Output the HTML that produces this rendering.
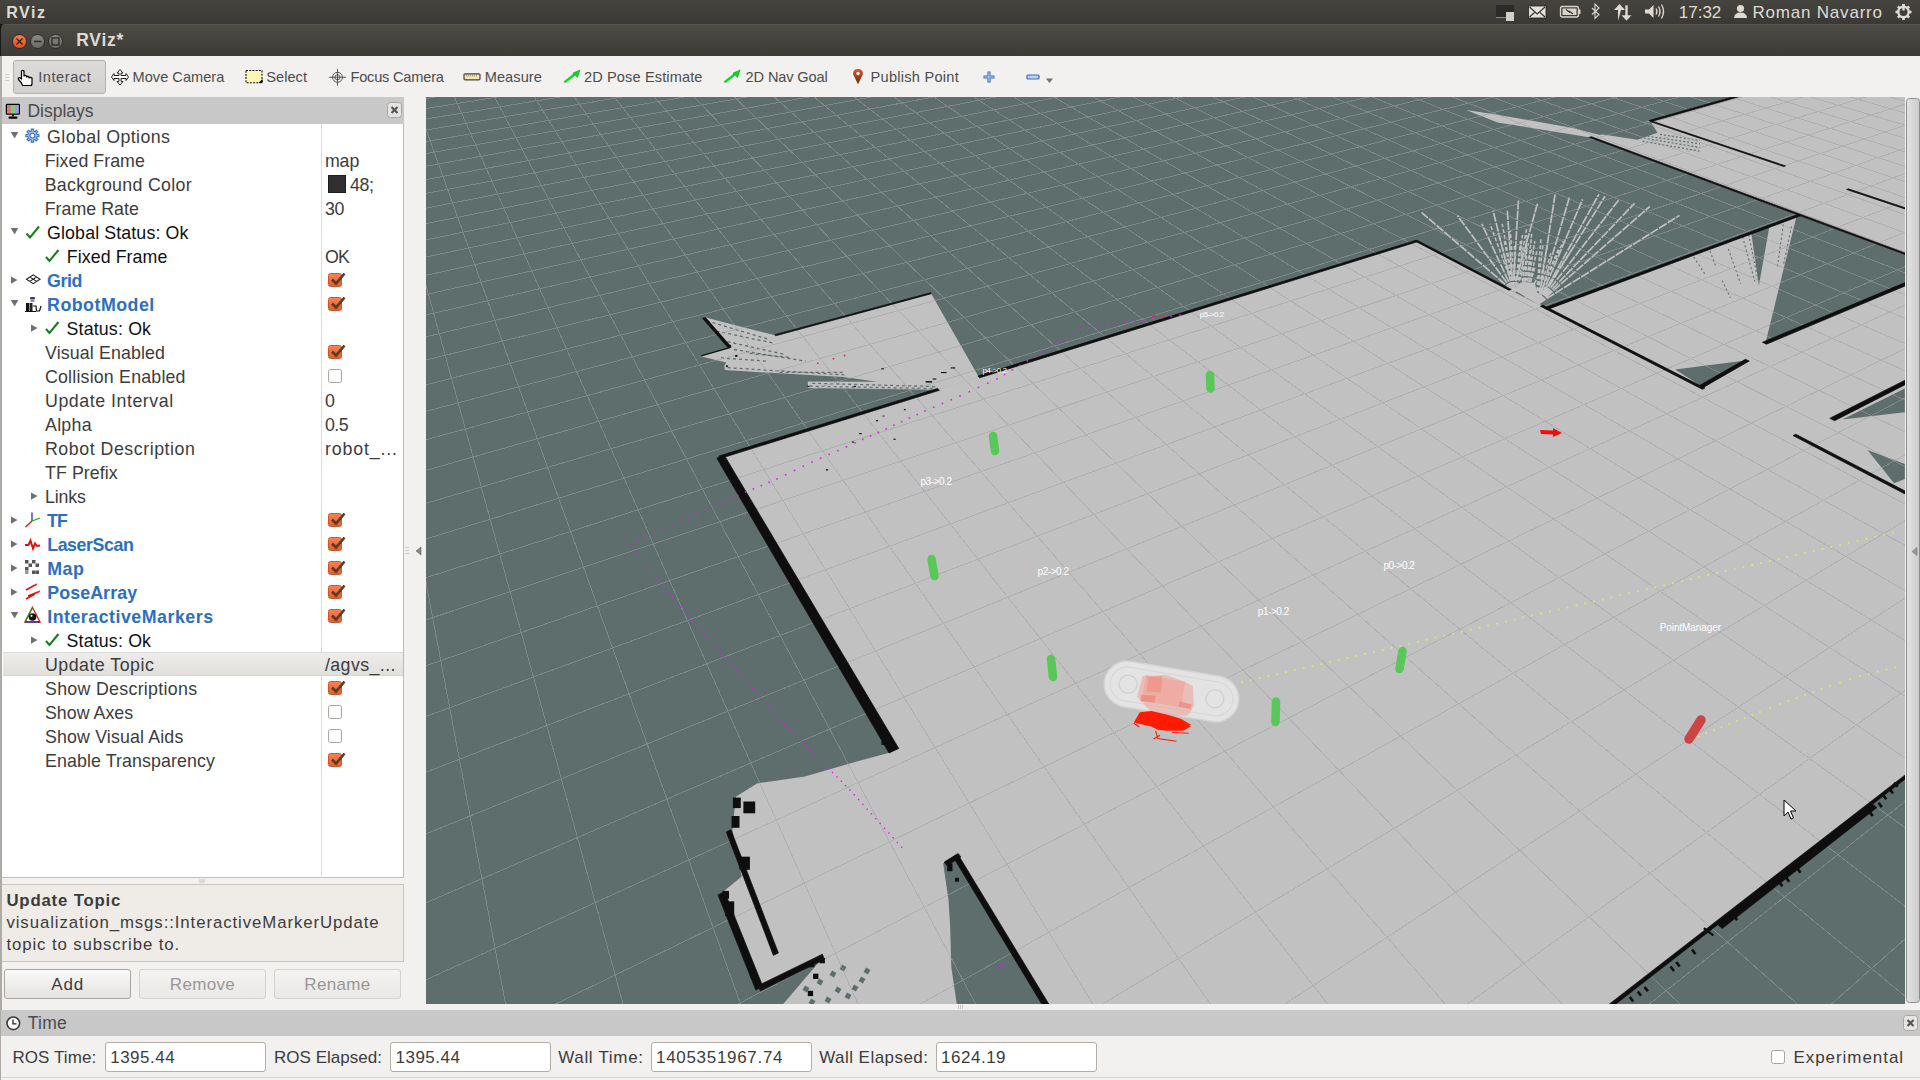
<!DOCTYPE html><html><head><meta charset="utf-8"><style>
*{margin:0;padding:0;box-sizing:border-box}
html,body{width:1920px;height:1080px;overflow:hidden;background:#f2f1f0;font-family:"Liberation Sans",sans-serif}
.t{position:absolute;line-height:1;white-space:pre}
.a{position:absolute}
.cb{position:absolute;width:14px;height:14px;border-radius:2.5px;background:linear-gradient(#f58352,#e0602c);border:1px solid #c9562a}
.cbu{position:absolute;width:14px;height:14px;border-radius:2.5px;background:#fff;border:1px solid #aaa49e}
.btn{position:absolute;border:1px solid #a9a49f;border-radius:3px;background:linear-gradient(#fafafa,#e4e2e0)}
.btnd{position:absolute;border:1px solid #d5d2ce;border-radius:3px;background:linear-gradient(#f4f3f2,#e9e8e6)}
.fld{position:absolute;background:#fff;border:1px solid #b3ada8;border-radius:3px}
</style></head><body>
<div class="a" style="left:0;top:0;width:1920px;height:24px;background:linear-gradient(#45443f,#3a3935)"></div>
<div class="t" style="left:6.25px;top:5.15px;font-size:16px;color:#dfdbd2;font-weight:bold;letter-spacing:1.550px;">RViz</div>
<div class="t" style="left:1678.75px;top:4.30px;font-size:17px;color:#dfdbd2;font-weight:normal;letter-spacing:0.000px;">17:32</div>
<div class="t" style="left:1752.50px;top:4.30px;font-size:17px;color:#dfdbd2;font-weight:normal;letter-spacing:0.792px;">Roman Navarro</div>
<div class="a" style="left:0;top:24px;width:8px;height:8px;background:#161614"></div>
<div class="a" style="left:0;top:24px;width:1920px;height:32px;background:linear-gradient(#4c4b46,#3c3b37);border-top-left-radius:5px;border-left:1px solid #1a1a1a;border-top:1px solid #56554f"></div>
<div class="t" style="left:76.25px;top:32.12px;font-size:17.5px;color:#dfdbd2;font-weight:bold;letter-spacing:0.725px;">RViz*</div>
<div class="a" style="left:12px;top:34px;width:15px;height:15px;border-radius:50%;background:linear-gradient(#f47b54,#e4521c);border:1px solid #2e2d2a"></div>
<div class="a" style="left:30px;top:34px;width:15px;height:15px;border-radius:50%;background:linear-gradient(#8a8984,#6a6964);border:1px solid #2e2d2a"></div>
<div class="a" style="left:48px;top:34px;width:15px;height:15px;border-radius:50%;background:linear-gradient(#8a8984,#6a6964);border:1px solid #2e2d2a"></div>
<div class="a" style="left:0;top:56px;width:2px;height:1024px;background:#aeaba6"></div>
<div class="a" style="left:13px;top:60px;width:93px;height:34px;border:1px solid #b5b0ab;border-radius:3px;background:linear-gradient(#dedcda,#d2d0ce)"></div>
<div class="t" style="left:38.25px;top:69.79px;font-size:14.6px;color:#4c4c4c;font-weight:normal;letter-spacing:0.543px;">Interact</div>
<div class="t" style="left:132.50px;top:69.79px;font-size:14.6px;color:#4c4c4c;font-weight:normal;letter-spacing:0.020px;">Move Camera</div>
<div class="t" style="left:266.25px;top:69.79px;font-size:14.6px;color:#4c4c4c;font-weight:normal;letter-spacing:0.030px;">Select</div>
<div class="t" style="left:350.50px;top:69.79px;font-size:14.6px;color:#4c4c4c;font-weight:normal;letter-spacing:-0.209px;">Focus Camera</div>
<div class="t" style="left:484.70px;top:69.79px;font-size:14.6px;color:#4c4c4c;font-weight:normal;letter-spacing:0.067px;">Measure</div>
<div class="t" style="left:584.00px;top:69.79px;font-size:14.6px;color:#4c4c4c;font-weight:normal;letter-spacing:0.107px;">2D Pose Estimate</div>
<div class="t" style="left:745.60px;top:69.79px;font-size:14.6px;color:#4c4c4c;font-weight:normal;letter-spacing:-0.140px;">2D Nav Goal</div>
<div class="t" style="left:870.60px;top:69.79px;font-size:14.6px;color:#4c4c4c;font-weight:normal;letter-spacing:0.242px;">Publish Point</div>
<div class="a" style="left:2px;top:97px;width:402px;height:27px;background:#c8c8c8"></div>
<div class="t" style="left:27.50px;top:102.62px;font-size:17.5px;color:#4c4c4c;font-weight:normal;letter-spacing:-0.014px;">Displays</div>
<div class="a" style="left:2px;top:124px;width:402px;height:754px;background:#fff;border-right:1px solid #bdb8b3;border-bottom:1px solid #c0bdb8"></div>
<div class="a" style="left:321px;top:124px;width:1px;height:754px;background:#dcdcdc"></div>
<div class="a" style="left:3px;top:652px;width:400px;height:24px;background:linear-gradient(#eeedeb,#e0dfdc);border-top:1px solid #dcdad7;border-bottom:1px solid #d6d4d1"></div>
<div class="t" style="left:47.10px;top:128.77px;font-size:17.8px;color:#3c3c3c;font-weight:normal;letter-spacing:0.400px;">Global Options</div>
<div class="t" style="left:44.70px;top:152.77px;font-size:17.8px;color:#3c3c3c;font-weight:normal;letter-spacing:0.030px;">Fixed Frame</div>
<div class="t" style="left:324.90px;top:152.77px;font-size:17.8px;color:#3c3c3c;font-weight:normal;letter-spacing:-0.100px;">map</div>
<div class="t" style="left:44.70px;top:176.77px;font-size:17.8px;color:#3c3c3c;font-weight:normal;letter-spacing:0.313px;">Background Color</div>
<div class="t" style="left:350.10px;top:176.77px;font-size:17.8px;color:#3c3c3c;font-weight:normal;letter-spacing:-0.450px;">48;</div>
<div class="t" style="left:44.70px;top:200.77px;font-size:17.8px;color:#3c3c3c;font-weight:normal;letter-spacing:0.033px;">Frame Rate</div>
<div class="t" style="left:324.90px;top:200.77px;font-size:17.8px;color:#3c3c3c;font-weight:normal;letter-spacing:-0.300px;">30</div>
<div class="t" style="left:47.10px;top:224.77px;font-size:17.8px;color:#101010;font-weight:normal;letter-spacing:0.119px;">Global Status: Ok</div>
<div class="t" style="left:66.80px;top:248.77px;font-size:17.8px;color:#101010;font-weight:normal;letter-spacing:0.070px;">Fixed Frame</div>
<div class="t" style="left:324.90px;top:248.77px;font-size:17.8px;color:#3c3c3c;font-weight:normal;letter-spacing:-0.700px;">OK</div>
<div class="t" style="left:47.10px;top:272.77px;font-size:17.8px;color:#2b70c0;font-weight:bold;letter-spacing:-0.400px;">Grid</div>
<div class="cb" style="left:328px;top:273px"></div>
<svg class="a" style="left:329px;top:271px" width="18" height="16"><path d="M3 8.5 L7 12.5 L15.5 2.5" stroke="#5b3a2c" stroke-width="2.6" fill="none" stroke-linejoin="miter"/></svg>
<div class="t" style="left:47.10px;top:296.77px;font-size:17.8px;color:#2b70c0;font-weight:bold;letter-spacing:0.489px;">RobotModel</div>
<div class="cb" style="left:328px;top:297px"></div>
<svg class="a" style="left:329px;top:295px" width="18" height="16"><path d="M3 8.5 L7 12.5 L15.5 2.5" stroke="#5b3a2c" stroke-width="2.6" fill="none" stroke-linejoin="miter"/></svg>
<div class="t" style="left:66.50px;top:320.77px;font-size:17.8px;color:#101010;font-weight:normal;letter-spacing:0.167px;">Status: Ok</div>
<div class="t" style="left:45.00px;top:344.77px;font-size:17.8px;color:#3c3c3c;font-weight:normal;letter-spacing:0.123px;">Visual Enabled</div>
<div class="cb" style="left:328px;top:345px"></div>
<svg class="a" style="left:329px;top:343px" width="18" height="16"><path d="M3 8.5 L7 12.5 L15.5 2.5" stroke="#5b3a2c" stroke-width="2.6" fill="none" stroke-linejoin="miter"/></svg>
<div class="t" style="left:45.00px;top:368.77px;font-size:17.8px;color:#3c3c3c;font-weight:normal;letter-spacing:0.194px;">Collision Enabled</div>
<div class="cbu" style="left:328px;top:369px"></div>
<div class="t" style="left:45.00px;top:392.77px;font-size:17.8px;color:#3c3c3c;font-weight:normal;letter-spacing:0.536px;">Update Interval</div>
<div class="t" style="left:324.90px;top:392.77px;font-size:17.8px;color:#3c3c3c;font-weight:normal;letter-spacing:0.000px;">0</div>
<div class="t" style="left:45.00px;top:416.77px;font-size:17.8px;color:#3c3c3c;font-weight:normal;letter-spacing:0.275px;">Alpha</div>
<div class="t" style="left:324.90px;top:416.77px;font-size:17.8px;color:#3c3c3c;font-weight:normal;letter-spacing:-0.500px;">0.5</div>
<div class="t" style="left:45.00px;top:440.77px;font-size:17.8px;color:#3c3c3c;font-weight:normal;letter-spacing:0.531px;">Robot Description</div>
<div class="t" style="left:324.90px;top:440.77px;font-size:17.8px;color:#3c3c3c;font-weight:normal;letter-spacing:0.863px;">robot_...</div>
<div class="t" style="left:45.00px;top:464.77px;font-size:17.8px;color:#3c3c3c;font-weight:normal;letter-spacing:0.075px;">TF Prefix</div>
<div class="t" style="left:45.00px;top:488.77px;font-size:17.8px;color:#3c3c3c;font-weight:normal;letter-spacing:-0.125px;">Links</div>
<div class="t" style="left:46.90px;top:512.77px;font-size:17.8px;color:#2b70c0;font-weight:bold;letter-spacing:-0.700px;">TF</div>
<div class="cb" style="left:328px;top:513px"></div>
<svg class="a" style="left:329px;top:511px" width="18" height="16"><path d="M3 8.5 L7 12.5 L15.5 2.5" stroke="#5b3a2c" stroke-width="2.6" fill="none" stroke-linejoin="miter"/></svg>
<div class="t" style="left:47.20px;top:536.77px;font-size:17.8px;color:#2b70c0;font-weight:bold;letter-spacing:-0.412px;">LaserScan</div>
<div class="cb" style="left:328px;top:537px"></div>
<svg class="a" style="left:329px;top:535px" width="18" height="16"><path d="M3 8.5 L7 12.5 L15.5 2.5" stroke="#5b3a2c" stroke-width="2.6" fill="none" stroke-linejoin="miter"/></svg>
<div class="t" style="left:47.20px;top:560.77px;font-size:17.8px;color:#2b70c0;font-weight:bold;letter-spacing:0.550px;">Map</div>
<div class="cb" style="left:328px;top:561px"></div>
<svg class="a" style="left:329px;top:559px" width="18" height="16"><path d="M3 8.5 L7 12.5 L15.5 2.5" stroke="#5b3a2c" stroke-width="2.6" fill="none" stroke-linejoin="miter"/></svg>
<div class="t" style="left:47.20px;top:584.77px;font-size:17.8px;color:#2b70c0;font-weight:bold;letter-spacing:0.113px;">PoseArray</div>
<div class="cb" style="left:328px;top:585px"></div>
<svg class="a" style="left:329px;top:583px" width="18" height="16"><path d="M3 8.5 L7 12.5 L15.5 2.5" stroke="#5b3a2c" stroke-width="2.6" fill="none" stroke-linejoin="miter"/></svg>
<div class="t" style="left:47.20px;top:608.77px;font-size:17.8px;color:#2b70c0;font-weight:bold;letter-spacing:0.512px;">InteractiveMarkers</div>
<div class="cb" style="left:328px;top:609px"></div>
<svg class="a" style="left:329px;top:607px" width="18" height="16"><path d="M3 8.5 L7 12.5 L15.5 2.5" stroke="#5b3a2c" stroke-width="2.6" fill="none" stroke-linejoin="miter"/></svg>
<div class="t" style="left:66.50px;top:632.77px;font-size:17.8px;color:#101010;font-weight:normal;letter-spacing:0.167px;">Status: Ok</div>
<div class="t" style="left:45.00px;top:656.77px;font-size:17.8px;color:#3c3c3c;font-weight:normal;letter-spacing:0.482px;">Update Topic</div>
<div class="t" style="left:324.90px;top:656.77px;font-size:17.8px;color:#3c3c3c;font-weight:normal;letter-spacing:0.425px;">/agvs_...</div>
<div class="t" style="left:45.00px;top:680.77px;font-size:17.8px;color:#3c3c3c;font-weight:normal;letter-spacing:0.300px;">Show Descriptions</div>
<div class="cb" style="left:328px;top:681px"></div>
<svg class="a" style="left:329px;top:679px" width="18" height="16"><path d="M3 8.5 L7 12.5 L15.5 2.5" stroke="#5b3a2c" stroke-width="2.6" fill="none" stroke-linejoin="miter"/></svg>
<div class="t" style="left:45.00px;top:704.77px;font-size:17.8px;color:#3c3c3c;font-weight:normal;letter-spacing:0.013px;">Show Axes</div>
<div class="cbu" style="left:328px;top:705px"></div>
<div class="t" style="left:45.00px;top:728.77px;font-size:17.8px;color:#3c3c3c;font-weight:normal;letter-spacing:0.147px;">Show Visual Aids</div>
<div class="cbu" style="left:328px;top:729px"></div>
<div class="t" style="left:45.00px;top:752.77px;font-size:17.8px;color:#3c3c3c;font-weight:normal;letter-spacing:0.100px;">Enable Transparency</div>
<div class="cb" style="left:328px;top:753px"></div>
<svg class="a" style="left:329px;top:751px" width="18" height="16"><path d="M3 8.5 L7 12.5 L15.5 2.5" stroke="#5b3a2c" stroke-width="2.6" fill="none" stroke-linejoin="miter"/></svg>
<div class="a" style="left:328px;top:175px;width:18px;height:18px;background:#303030;border:1px solid #1e1e1e"></div>
<div class="a" style="left:404px;top:97px;width:22px;height:907px;background:#f2f1f0"></div>
<div class="a" style="left:2px;top:884px;width:402px;height:78px;background:#efebe7;border:1px solid #c9c5c1;border-left:none"></div>
<div class="t" style="left:6.40px;top:893.22px;font-size:16.8px;color:#3c3c3c;font-weight:bold;letter-spacing:0.818px;">Update Topic</div>
<div class="t" style="left:6.40px;top:915.22px;font-size:16.8px;color:#3c3c3c;font-weight:normal;letter-spacing:0.912px;">visualization_msgs::InteractiveMarkerUpdate</div>
<div class="t" style="left:6.40px;top:937.02px;font-size:16.8px;color:#3c3c3c;font-weight:normal;letter-spacing:0.900px;">topic to subscribe to.</div>
<div class="btn" style="left:4px;top:969px;width:127px;height:30px"></div>
<div class="btnd" style="left:139px;top:969px;width:127px;height:30px"></div>
<div class="btnd" style="left:274px;top:969px;width:127px;height:30px"></div>
<div class="t" style="left:51.20px;top:976.15px;font-size:17px;color:#3c3c3c;font-weight:normal;letter-spacing:0.900px;">Add</div>
<div class="t" style="left:169.80px;top:976.15px;font-size:17px;color:#9a9794;font-weight:normal;letter-spacing:0.340px;">Remove</div>
<div class="t" style="left:304.30px;top:976.15px;font-size:17px;color:#9a9794;font-weight:normal;letter-spacing:0.340px;">Rename</div>
<div class="a" style="left:426px;top:97px;width:1479px;height:907px;overflow:hidden"><svg width="1479" height="907" viewBox="0 0 1479 907" style="position:absolute;left:0;top:0">
<rect width="1479" height="907" fill="#5d6e6c"/>
<polygon points="294.7,359.9 990.8,144.0 1120.0,211.6 1373.2,118.2 1166.2,40.0 1492.7,-52.2 2196.0,122.8 541.7,1405.0 357.0,907.3 397.5,859.8 333.3,891.2 295.3,796.3 315.7,779.6 306.4,732.9 309.9,699.7 330.9,686.4 378.8,679.4 429.0,665.1 464.1,655.4" fill="#c1c1c1"/>
<polygon points="278.1,219.9 312.0,229.0 349.1,238.2 505.1,196.4 552.9,280.2 512.5,292.8 382.3,290.9 381.6,284.4 451.3,284.8 417.4,280.1 298.9,273.1 298.3,268.8 300.2,265.5 274.2,259.2 304.2,250.5 278.1,219.9" fill="#c1c1c1"/>
<line x1="280.7" y1="223.8" x2="341.9" y2="242.1" stroke="#5d6e6c" stroke-width="1.3" stroke-dasharray="3 3"/>
<line x1="284.6" y1="232.9" x2="347.1" y2="246.0" stroke="#5d6e6c" stroke-width="1.3" stroke-dasharray="3 3"/>
<line x1="289.8" y1="242.1" x2="360.1" y2="257.7" stroke="#5d6e6c" stroke-width="1.3" stroke-dasharray="3 3"/>
<line x1="308.1" y1="252.5" x2="379.7" y2="264.2" stroke="#5d6e6c" stroke-width="1.3" stroke-dasharray="3 3"/>
<line x1="301.6" y1="270.7" x2="418.7" y2="277.9" stroke="#5d6e6c" stroke-width="1.3" stroke-dasharray="3 3"/>
<line x1="353.6" y1="275.3" x2="417.4" y2="275.3" stroke="#5d6e6c" stroke-width="1.3" stroke-dasharray="3 3"/>
<line x1="386.2" y1="286.3" x2="509.9" y2="289.6" stroke="#5d6e6c" stroke-width="1.3" stroke-dasharray="3 3"/>
<line x1="383.6" y1="289.2" x2="509.9" y2="291.5" stroke="#5d6e6c" stroke-width="1.3" stroke-dasharray="3 3"/>
<line x1="323.7" y1="256.4" x2="362.8" y2="260.3" stroke="#5d6e6c" stroke-width="1.3" stroke-dasharray="3 3"/>
<line x1="295.0" y1="260.9" x2="341.9" y2="264.2" stroke="#5d6e6c" stroke-width="1.3" stroke-dasharray="3 3"/>
<polygon points="517.2,766.4 529.5,758.6 662.2,973.2 555.7,1040.1 530.8,907.0 525.3,869.9 524.2,829.9 522.5,802.9" fill="#5d6e6c"/>
<polygon points="1373.2,118.2 1370.6,119.1 1339.3,246.7 1514.7,171.6" fill="#5d6e6c"/>
<polygon points="1249.2,272.6 1321.4,263.2 1277.7,290.7" fill="#5d6e6c"/>
<polygon points="1325.2,135.6 1344.1,125.4 1332.9,188.6" fill="#5d6e6c"/>
<polygon points="1416.3,322.6 1478.8,291.5 1478.8,315.2" fill="#5d6e6c"/>
<polygon points="1441.5,353.0 1478.8,367.1 1478.8,381.9 1468.1,386.3" fill="#5d6e6c"/>
<polygon points="1165.2,35.8 1211.5,42.8 1231.5,35.8 1224.6,24.5 1196.5,29.2" fill="#5d6e6c"/>
<line x1="1267.7" y1="160.0" x2="1279.9" y2="178.4" stroke="#5d6e6c" stroke-width="1.1" stroke-dasharray="2 2.5"/>
<line x1="1284.0" y1="153.9" x2="1290.1" y2="170.2" stroke="#5d6e6c" stroke-width="1.1" stroke-dasharray="2 2.5"/>
<line x1="1296.2" y1="183.5" x2="1304.4" y2="200.8" stroke="#5d6e6c" stroke-width="1.1" stroke-dasharray="2 2.5"/>
<line x1="1302.4" y1="151.9" x2="1314.6" y2="186.5" stroke="#5d6e6c" stroke-width="1.1" stroke-dasharray="2 2.5"/>
<line x1="1316.6" y1="139.7" x2="1328.8" y2="184.5" stroke="#5d6e6c" stroke-width="1.1" stroke-dasharray="2 2.5"/>
<line x1="1322.7" y1="137.6" x2="1331.9" y2="182.5" stroke="#5d6e6c" stroke-width="1.1" stroke-dasharray="2 2.5"/>
<line x1="1357.4" y1="127.4" x2="1351.3" y2="170.2" stroke="#5d6e6c" stroke-width="1.1" stroke-dasharray="2 2.5"/>
<line x1="1365.5" y1="129.5" x2="1357.4" y2="168.2" stroke="#5d6e6c" stroke-width="1.1" stroke-dasharray="2 2.5"/>
<polygon points="1040.2,13.0 1071.5,17.8 1109.0,24.2 1146.5,31.1 1165.2,35.8 1184.0,40.5 1161.5,39.9 1109.0,31.5 1071.5,25.5" fill="#c1c1c1"/>
<line x1="1214.0" y1="40.5" x2="1274.0" y2="50.5" stroke="#5d6e6c" stroke-width="1.2" stroke-dasharray="2 2"/>
<line x1="1221.5" y1="39.2" x2="1274.0" y2="46.8" stroke="#5d6e6c" stroke-width="1.2" stroke-dasharray="2 2"/>
<line x1="1216.5" y1="44.2" x2="1274.0" y2="54.2" stroke="#5d6e6c" stroke-width="1.2" stroke-dasharray="2 2"/>
<line x1="1234.0" y1="37.4" x2="1274.0" y2="43.6" stroke="#5d6e6c" stroke-width="1.2" stroke-dasharray="2 2"/>
<rect x="377.5" y="889.5" width="5" height="5" fill="#5d6e6c" transform="rotate(30 380 892)"/>
<rect x="391.5" y="882.5" width="5" height="5" fill="#5d6e6c" transform="rotate(30 394 885)"/>
<rect x="404.5" y="874.5" width="5" height="5" fill="#5d6e6c" transform="rotate(30 407 877)"/>
<rect x="414.5" y="868.5" width="5" height="5" fill="#5d6e6c" transform="rotate(30 417 871)"/>
<rect x="419.5" y="896.5" width="5" height="5" fill="#5d6e6c" transform="rotate(30 422 899)"/>
<rect x="409.5" y="890.5" width="5" height="5" fill="#5d6e6c" transform="rotate(30 412 893)"/>
<rect x="399.5" y="900.5" width="5" height="5" fill="#5d6e6c" transform="rotate(30 402 903)"/>
<rect x="383.5" y="902.5" width="5" height="5" fill="#5d6e6c" transform="rotate(30 386 905)"/>
<rect x="426.5" y="888.5" width="5" height="5" fill="#5d6e6c" transform="rotate(30 429 891)"/>
<rect x="433.5" y="880.5" width="5" height="5" fill="#5d6e6c" transform="rotate(30 436 883)"/>
<rect x="438.5" y="871.5" width="5" height="5" fill="#5d6e6c" transform="rotate(30 441 874)"/>
<path d="M1087.0 194.0L995.7 115.6M1087.0 194.0L1031.4 118.6M1087.0 194.0L1055.8 126.8M1087.0 194.0L1067.0 113.5M1087.0 194.0L1081.3 113.5M1087.0 194.0L1092.5 102.3M1087.0 194.0L1111.8 105.4M1112.0 207.0L1129.1 97.3M1112.0 207.0L1143.4 100.3M1112.0 207.0L1156.6 102.3M1112.0 207.0L1172.9 97.3M1112.0 207.0L1179.0 99.3M1112.0 207.0L1193.3 102.3M1112.0 207.0L1208.5 106.4M1112.0 207.0L1223.8 109.5M1112.0 207.0L1253.5 118.4" stroke="#c1c1c1" stroke-width="1.7" fill="none" stroke-dasharray="9 1.2"/>
<path d="M1089.0 195.0L1064.0 126.8M1089.0 195.0L1076.2 126.8M1089.0 195.0L1084.3 133.9M1089.0 195.0L1096.5 138.0M1089.0 195.0L1102.6 146.1M1110.0 206.0L1116.9 148.2M1110.0 206.0L1125.0 155.3M1110.0 206.0L1131.2 156.3M1110.0 206.0L1141.3 159.4M1089.0 195.0L1106.7 150.2M1089.0 195.0L1094.5 144.1M1089.0 195.0L1088.4 148.2M1110.0 206.0L1114.9 142.1M1110.0 206.0L1121.0 150.2M1089.0 195.0L1072.1 135.9M1089.0 195.0L1078.2 144.1M1110.0 206.0L1133.2 150.2M1110.0 206.0L1137.3 144.1M1110.0 206.0L1147.4 150.2M1089.0 195.0L1100.6 131.9" stroke="#c1c1c1" stroke-width="1.5" fill="none" stroke-dasharray="4 2"/>
<path d="M1100.0 201.0L1094.5 144.1M1100.0 201.0L1099.6 150.2M1100.0 201.0L1104.7 160.4M1100.0 201.0L1108.8 144.1M1100.0 201.0L1096.5 160.4M1100.0 201.0L1102.6 168.5M1100.0 201.0L1110.8 154.3M1100.0 201.0L1108.8 170.6M1100.0 201.0L1105.7 135.9M1100.0 201.0L1100.6 138.0M1100.0 201.0L1094.5 172.6M1100.0 201.0L1112.8 178.7M1100.0 201.0L1097.6 180.7" stroke="#c1c1c1" stroke-width="1.6" fill="none" stroke-dasharray="4 1.5"/>
<polygon points="1086.4,191.9 1096.5,184.8 1108.8,185.8 1114.9,209.2" fill="#c1c1c1"/>
<path d="M-383.5 -163.0L30417.4 -46370.5M-355.9 -165.5L-105701.4 181158.0M-328.8 -168.0L-15287.1 30026.5M-302.1 -170.4L-7002.0 16177.7M-275.9 -172.8L-3892.3 10979.6M-250.0 -175.1L-2262.7 8255.8M-224.6 -177.4L-1259.7 6579.3M-199.6 -179.7L-580.2 5443.4M-174.9 -181.9L-89.4 4622.9M-150.7 -184.1L281.8 4002.6M-126.8 -186.3L572.2 3517.0M-103.3 -188.4L805.8 3126.7M-80.1 -190.5L997.6 2806.0M-57.3 -192.5L1158.0 2537.9M-34.8 -194.6L1294.1 2310.5M-12.7 -196.6L1411.0 2115.0M9.1 -198.6L1512.5 1945.3M30.6 -200.5L1601.5 1796.5M51.8 -202.4L1680.2 1665.0M72.7 -204.3L1750.2 1548.0M93.3 -206.2L1812.9 1443.1M113.6 -208.0L1869.5 1348.7M133.6 -209.8L1920.6 1263.1M153.3 -211.6L1967.2 1185.3M172.7 -213.4L2009.8 1114.1M191.9 -215.1L2048.8 1048.9M210.8 -216.8L2084.7 988.8M229.5 -218.5L2117.9 933.3M247.9 -220.2L2148.7 881.9M266.1 -221.8L2177.3 834.1M284.0 -223.4L2203.9 789.6M301.7 -225.0L2228.8 748.1M319.1 -226.6L2252.0 709.2M336.3 -228.2L2273.8 672.7M353.3 -229.7L2294.3 638.5M370.1 -231.2L2313.6 606.2M386.7 -232.7L2331.9 575.8M403.0 -234.2L2349.1 547.0M419.2 -235.7L2365.3 519.8M435.1 -237.1L2380.8 494.0M450.9 -238.6L2395.4 469.5M466.4 -240.0L2409.3 446.3M481.8 -241.4L2422.5 424.2M496.9 -242.7L2435.1 403.1M511.9 -244.1L2447.2 383.0M526.7 -245.4L2458.7 363.8M541.4 -246.7L2469.6 345.5M555.8 -248.1L2480.1 327.9M570.1 -249.3L2490.2 311.1M584.2 -250.6L2499.8 295.0M598.1 -251.9L2509.1 279.6M611.9 -253.1L2517.9 264.7M625.5 -254.4L2526.5 250.5M639.0 -255.6L2534.7 236.8M652.3 -256.8L2542.6 223.6M665.4 -258.0L2550.2 210.9M678.5 -259.2L2557.5 198.6M691.3 -260.3L2564.5 186.8M704.0 -261.5L2571.4 175.4M716.6 -262.6L2578.0 164.4M729.0 -263.7L2584.3 153.8M741.3 -264.8L2590.5 143.5M753.5 -265.9L2596.4 133.5M765.5 -267.0L2602.2 123.9M777.4 -268.1L2607.7 114.6M789.2 -269.2L2613.2 105.6M800.8 -270.2L2618.4 96.8M812.3 -271.3L2623.5 88.3M823.7 -272.3L2628.4 80.1M835.0 -273.3L2633.2 72.1M-383.5 -163.0L846.1 -274.3M-386.2 -159.0L854.6 -272.7M-388.9 -154.9L863.2 -271.1M-391.7 -150.7L871.9 -269.5M-394.6 -146.4L880.7 -267.8M-397.6 -142.0L889.7 -266.1M-400.6 -137.4L898.9 -264.4M-403.7 -132.7L908.2 -262.6M-407.0 -127.9L917.7 -260.8M-410.3 -122.9L927.4 -259.0M-413.7 -117.8L937.2 -257.1M-417.2 -112.5L947.2 -255.2M-420.8 -107.1L957.4 -253.3M-424.6 -101.5L967.8 -251.3M-428.4 -95.7L978.3 -249.3M-432.4 -89.7L989.1 -247.3M-436.5 -83.6L1000.1 -245.2M-440.7 -77.2L1011.2 -243.1M-445.1 -70.6L1022.6 -241.0M-449.6 -63.8L1034.2 -238.8M-454.3 -56.8L1046.0 -236.6M-459.2 -49.5L1058.1 -234.3M-464.2 -42.0L1070.4 -231.9M-469.4 -34.1L1082.9 -229.6M-474.8 -26.0L1095.7 -227.2M-480.5 -17.6L1108.8 -224.7M-486.3 -8.9L1122.1 -222.2M-492.4 0.3L1135.7 -219.6M-498.7 9.7L1149.6 -217.0M-505.2 19.6L1163.8 -214.3M-512.1 29.9L1178.3 -211.5M-519.2 40.6L1193.2 -208.7M-526.7 51.8L1208.3 -205.9M-534.5 63.4L1223.8 -203.0M-542.6 75.7L1239.6 -200.0M-551.2 88.5L1255.8 -196.9M-560.1 101.9L1272.4 -193.8M-569.5 116.0L1289.3 -190.6M-579.4 130.8L1306.7 -187.3M-589.7 146.3L1324.4 -183.9M-600.7 162.7L1342.6 -180.5M-612.2 180.0L1361.3 -177.0M-624.4 198.3L1380.4 -173.4M-637.3 217.6L1400.0 -169.7M-650.9 238.1L1420.1 -165.9M-665.4 259.9L1440.7 -162.0M-680.8 283.0L1461.8 -158.0M-697.3 307.6L1483.5 -153.9M-714.8 334.0L1505.8 -149.7M-733.6 362.1L1528.6 -145.3M-753.7 392.3L1552.2 -140.9M-775.4 424.8L1576.3 -136.3M-798.7 459.9L1601.2 -131.6M-824.0 497.8L1626.7 -126.8M-851.4 538.9L1653.1 -121.8M-881.3 583.7L1680.1 -116.7M-913.9 632.7L1708.0 -111.4M-949.8 686.4L1736.8 -106.0M-989.3 745.7L1766.4 -100.4M-1033.0 811.4L1797.0 -94.6M-1081.8 884.6L1828.5 -88.6M-1136.5 966.6L1861.1 -82.5M-1198.3 1059.3L1894.7 -76.1M-1268.6 1164.8L1929.5 -69.6M-1349.3 1285.9L1965.5 -62.8M-1443.0 1426.4L2002.7 -55.7M-1553.0 1591.4L2041.2 -48.5M-1683.9 1787.8L2081.1 -40.9M-1842.5 2025.7L2122.4 -33.1M-2038.4 2319.6L2165.3 -25.0M-2286.7 2692.1L2209.9 -16.6M-2611.6 3179.4L2256.1 -7.8M-3054.9 3844.5L2304.2 1.3M-3695.9 4806.2L2354.2 10.7M-4704.9 6319.8L2406.3 20.5M-6526.0 9051.8L2460.5 30.8M-10800.2 15464.1L2517.1 41.5M-32712.2 48336.3L2576.1 52.7M30417.4 -46370.5L2637.8 64.3" stroke="rgba(160,160,164,0.5)" stroke-width="1" fill="none" shape-rendering="crispEdges"/>
<polygon points="294.2,361.5 513.4,293.3 511.6,291.4 292.8,359.1" fill="#0e0e0e" stroke="#0e0e0e" stroke-width="0.7"/>
<polygon points="553.7,280.8 992.0,144.6 989.6,143.4 551.9,278.9" fill="#0e0e0e" stroke="#0e0e0e" stroke-width="0.7"/>
<polygon points="290.8,361.2 463.0,656.0 472.8,651.5 298.6,358.7" fill="#0e0e0e" stroke="#0e0e0e" stroke-width="0.7"/>
<polygon points="988.7,143.9 1082.9,193.2 1085.3,192.4 991.0,143.2" fill="#0e0e0e" stroke="#0e0e0e" stroke-width="0.7"/>
<polygon points="1114.5,209.3 1276.3,292.3 1279.0,291.0 1117.2,208.3" fill="#0e0e0e" stroke="#0e0e0e" stroke-width="0.7"/>
<polygon points="1121.5,212.4 1374.7,118.8 1371.6,117.6 1118.5,210.8" fill="#0e0e0e" stroke="#0e0e0e" stroke-width="0.7"/>
<polygon points="1163.3,40.3 1878.7,306.4 1880.6,305.0 1165.5,39.7" fill="#0e0e0e" stroke="#0e0e0e" stroke-width="0.7"/>
<polygon points="1225.6,24.5 1407.0,-26.9 1404.4,-27.7 1222.9,23.6" fill="#0e0e0e" stroke="#0e0e0e" stroke-width="0.7"/>
<polygon points="1224.2,24.6 1357.7,69.5 1359.5,68.9 1226.0,24.1" fill="#0e0e0e" stroke="#0e0e0e" stroke-width="0.7"/>
<polygon points="1420.6,92.5 1480.8,112.6 1482.5,111.8 1422.3,91.8" fill="#0e0e0e" stroke="#0e0e0e" stroke-width="0.7"/>
<polygon points="1276.7,290.7 1323.3,264.0 1319.4,262.3 1272.7,288.9" fill="#0e0e0e" stroke="#0e0e0e" stroke-width="0.7"/>
<polygon points="1340.5,247.2 1518.9,172.2 1514.9,170.6 1336.4,245.3" fill="#0e0e0e" stroke="#0e0e0e" stroke-width="0.7"/>
<polygon points="1408.6,323.7 1652.7,199.1 1648.1,197.4 1403.8,321.3" fill="#0e0e0e" stroke="#0e0e0e" stroke-width="0.7"/>
<polygon points="1367.0,338.6 1884.8,608.7 1887.3,606.2 1369.8,337.2" fill="#0e0e0e" stroke="#0e0e0e" stroke-width="0.7"/>
<polygon points="527.1,759.8 744.0,1120.2 749.7,1116.0 531.9,757.3" fill="#0e0e0e" stroke="#0e0e0e" stroke-width="0.7"/>
<polygon points="520.9,768.7 534.8,760.0 532.1,756.4 518.2,765.1" fill="#0e0e0e" stroke="#0e0e0e" stroke-width="0.7"/>
<polygon points="300.3,734.9 347.4,858.4 352.4,855.9 304.9,732.8" fill="#0e0e0e" stroke="#0e0e0e" stroke-width="0.7"/>
<polygon points="292.0,797.9 329.8,893.1 336.8,889.3 298.6,794.7" fill="#0e0e0e" stroke="#0e0e0e" stroke-width="0.7"/>
<polygon points="334.2,894.0 398.5,862.5 396.4,857.2 332.4,888.4" fill="#0e0e0e" stroke="#0e0e0e" stroke-width="0.7"/>
<polygon points="349.6,238.8 505.4,196.7 504.4,195.8 348.8,237.7" fill="#0e0e0e" stroke="#0e0e0e" stroke-width="0.7"/>
<polygon points="276.5,221.3 302.3,251.0 305.3,250.1 279.5,220.5" fill="#0e0e0e" stroke="#0e0e0e" stroke-width="0.7"/>
<line x1="275.1" y1="258.9" x2="303.8" y2="250.6" stroke="#0e0e0e" stroke-width="1.3"/>
<rect x="455.3" y="271.3" width="2.6" height="1.1" fill="#0e0e0e"/>
<rect x="449.9" y="323.2" width="2.2" height="1.1" fill="#0e0e0e"/>
<rect x="456.6" y="318.6" width="1.9" height="0.9" fill="#0e0e0e"/>
<rect x="433.1" y="336.1" width="2.6" height="1.1" fill="#0e0e0e"/>
<rect x="425.9" y="344.5" width="2.2" height="1.1" fill="#0e0e0e"/>
<rect x="399.9" y="372.2" width="2.2" height="1.3" fill="#0e0e0e"/>
<rect x="514.9" y="275.0" width="5.6" height="1.1" fill="#0e0e0e"/>
<rect x="524.6" y="270.4" width="4.6" height="1.1" fill="#0e0e0e"/>
<rect x="499.6" y="284.1" width="6.5" height="1.5" fill="#0e0e0e"/>
<rect x="506.6" y="281.5" width="3.7" height="1.1" fill="#0e0e0e"/>
<rect x="299.9" y="268.4" width="2.2" height="1.5" fill="#0e0e0e"/>
<rect x="309.2" y="258.0" width="2.2" height="1.9" fill="#0e0e0e"/>
<rect x="302.7" y="247.8" width="2.2" height="1.9" fill="#0e0e0e"/>
<rect x="381.6" y="288.9" width="1.9" height="1.1" fill="#0e0e0e"/>
<rect x="427.7" y="288.9" width="2.2" height="1.1" fill="#0e0e0e"/>
<rect x="477.9" y="312.1" width="1.9" height="1.1" fill="#0e0e0e"/>
<rect x="467.5" y="341.7" width="2.2" height="1.1" fill="#0e0e0e"/>
<rect x="391.0" y="265.5" width="1.6" height="1.6" fill="#ff2020"/>
<rect x="406.7" y="260.9" width="1.6" height="1.6" fill="#ff2020"/>
<rect x="417.8" y="257.8" width="1.6" height="1.6" fill="#ff2020"/>
<rect x="306.9" y="700.6" width="7.9" height="10.5" fill="#0e0e0e"/>
<rect x="317.4" y="704.5" width="11.8" height="11.8" fill="#0e0e0e"/>
<rect x="305.6" y="719.0" width="7.9" height="11.8" fill="#0e0e0e"/>
<rect x="313.4" y="759.7" width="10.5" height="13.1" fill="#0e0e0e"/>
<rect x="296.4" y="793.9" width="6.6" height="7.9" fill="#0e0e0e"/>
<rect x="299.0" y="804.4" width="9.2" height="14.5" fill="#0e0e0e"/>
<rect x="313.4" y="846.5" width="5.3" height="3.9" fill="#0e0e0e"/>
<rect x="324.0" y="876.7" width="5.3" height="3.9" fill="#0e0e0e"/>
<rect x="381.8" y="864.9" width="6.6" height="5.3" fill="#0e0e0e"/>
<rect x="393.6" y="861.0" width="5.3" height="5.3" fill="#0e0e0e"/>
<rect x="387.1" y="876.7" width="5.3" height="5.3" fill="#0e0e0e"/>
<rect x="381.8" y="893.8" width="5.3" height="5.3" fill="#0e0e0e"/>
<rect x="455.4" y="644.0" width="5.3" height="3.9" fill="#0e0e0e"/>
<rect x="521.2" y="766.3" width="5.3" height="7.9" fill="#0e0e0e"/>
<rect x="529.1" y="780.8" width="3.9" height="3.9" fill="#0e0e0e"/>
<polygon points="1176.8,912.1 1288.9,825.2 1291.8,827.7 1179.6,915.0" fill="#0e0e0e" stroke="#0e0e0e" stroke-width="0.6"/>
<polygon points="1288.9,825.2 1443.8,705.2 1451.1,710.4 1296.2,831.6" fill="#0e0e0e" stroke="#0e0e0e" stroke-width="0.6"/>
<polygon points="1443.8,705.2 1513.0,651.6 1515.8,653.5 1446.7,707.3" fill="#0e0e0e" stroke="#0e0e0e" stroke-width="0.6"/>
<rect x="1204.4" y="899.5" width="2.6" height="5.5" fill="#0e0e0e" transform="rotate(-37 1205.6 902.5)"/>
<rect x="1212.3" y="893.9" width="2.6" height="5.5" fill="#0e0e0e" transform="rotate(-37 1213.5 896.9)"/>
<rect x="1219.1" y="889.4" width="2.6" height="5.5" fill="#0e0e0e" transform="rotate(-37 1220.3 892.4)"/>
<rect x="1245.1" y="869.0" width="2.6" height="5.5" fill="#0e0e0e" transform="rotate(-37 1246.3 872.0)"/>
<rect x="1250.8" y="864.5" width="2.6" height="5.5" fill="#0e0e0e" transform="rotate(-37 1252.0 867.5)"/>
<rect x="1266.6" y="852.1" width="2.6" height="5.5" fill="#0e0e0e" transform="rotate(-37 1267.8 855.1)"/>
<rect x="1308.4" y="818.2" width="2.6" height="5.5" fill="#0e0e0e" transform="rotate(-37 1309.6 821.2)"/>
<rect x="1353.6" y="784.3" width="2.6" height="5.5" fill="#0e0e0e" transform="rotate(-37 1354.8 787.3)"/>
<rect x="1360.4" y="779.8" width="2.6" height="5.5" fill="#0e0e0e" transform="rotate(-37 1361.6 782.8)"/>
<rect x="1371.7" y="770.7" width="2.6" height="5.5" fill="#0e0e0e" transform="rotate(-37 1372.9 773.7)"/>
<rect x="1444.0" y="714.2" width="2.6" height="5.5" fill="#0e0e0e" transform="rotate(-37 1445.2 717.2)"/>
<rect x="1453.0" y="705.2" width="2.6" height="5.5" fill="#0e0e0e" transform="rotate(-37 1454.2 708.2)"/>
<rect x="1457.5" y="697.3" width="2.6" height="5.5" fill="#0e0e0e" transform="rotate(-37 1458.7 700.3)"/>
<rect x="1464.3" y="691.6" width="2.6" height="5.5" fill="#0e0e0e" transform="rotate(-37 1465.5 694.6)"/>
<rect x="1468.8" y="684.9" width="2.6" height="5.5" fill="#0e0e0e" transform="rotate(-37 1470.0 687.9)"/>
<rect x="1281.5" y="828.8" width="2.2" height="12" fill="#0e0e0e" transform="rotate(-52 1282.5 834.8)"/>
<rect x="753.2" y="217.2" width="1.6" height="1.6" fill="#e020e0"/><rect x="744.2" y="218.5" width="1.6" height="1.6" fill="#e020e0"/><rect x="735.2" y="219.7" width="1.6" height="1.6" fill="#e020e0"/><rect x="726.2" y="221.0" width="1.6" height="1.6" fill="#e020e0"/><rect x="717.2" y="222.3" width="1.6" height="1.6" fill="#e020e0"/><rect x="708.2" y="223.6" width="1.6" height="1.6" fill="#e020e0"/><rect x="699.2" y="224.8" width="1.6" height="1.6" fill="#e020e0"/><rect x="690.2" y="226.1" width="1.6" height="1.6" fill="#e020e0"/><rect x="681.2" y="227.4" width="1.6" height="1.6" fill="#e020e0"/><rect x="672.2" y="228.7" width="1.6" height="1.6" fill="#e020e0"/><rect x="663.2" y="229.9" width="1.6" height="1.6" fill="#e020e0"/><rect x="654.2" y="231.2" width="1.6" height="1.6" fill="#e020e0"/><rect x="646.6" y="235.7" width="1.6" height="1.6" fill="#e020e0"/><rect x="638.9" y="240.3" width="1.6" height="1.6" fill="#e020e0"/><rect x="631.3" y="244.8" width="1.6" height="1.6" fill="#e020e0"/><rect x="623.7" y="249.4" width="1.6" height="1.6" fill="#e020e0"/><rect x="616.0" y="253.9" width="1.6" height="1.6" fill="#e020e0"/><rect x="608.4" y="258.5" width="1.6" height="1.6" fill="#e020e0"/><rect x="600.7" y="263.0" width="1.6" height="1.6" fill="#e020e0"/><rect x="593.1" y="267.6" width="1.6" height="1.6" fill="#e020e0"/><rect x="585.5" y="272.1" width="1.6" height="1.6" fill="#e020e0"/><rect x="577.8" y="276.7" width="1.6" height="1.6" fill="#e020e0"/><rect x="570.2" y="281.2" width="1.6" height="1.6" fill="#e020e0"/><rect x="561.0" y="285.4" width="1.6" height="1.6" fill="#e020e0"/><rect x="551.7" y="289.7" width="1.6" height="1.6" fill="#e020e0"/><rect x="542.5" y="293.9" width="1.6" height="1.6" fill="#e020e0"/><rect x="533.2" y="298.2" width="1.6" height="1.6" fill="#e020e0"/><rect x="524.5" y="301.9" width="1.6" height="1.6" fill="#e020e0"/><rect x="515.7" y="305.7" width="1.6" height="1.6" fill="#e020e0"/><rect x="506.9" y="309.4" width="1.6" height="1.6" fill="#e020e0"/><rect x="498.2" y="313.2" width="1.6" height="1.6" fill="#e020e0"/><rect x="490.4" y="316.8" width="1.6" height="1.6" fill="#e020e0"/><rect x="482.6" y="320.3" width="1.6" height="1.6" fill="#e020e0"/><rect x="474.9" y="323.9" width="1.6" height="1.6" fill="#e020e0"/><rect x="467.1" y="327.4" width="1.6" height="1.6" fill="#e020e0"/><rect x="459.3" y="331.0" width="1.6" height="1.6" fill="#e020e0"/><rect x="451.5" y="334.5" width="1.6" height="1.6" fill="#e020e0"/><rect x="443.8" y="338.1" width="1.6" height="1.6" fill="#e020e0"/><rect x="436.0" y="341.6" width="1.6" height="1.6" fill="#e020e0"/><rect x="428.2" y="345.2" width="1.6" height="1.6" fill="#e020e0"/><rect x="419.6" y="349.0" width="1.6" height="1.6" fill="#e020e0"/><rect x="411.0" y="352.8" width="1.6" height="1.6" fill="#e020e0"/><rect x="402.4" y="356.6" width="1.6" height="1.6" fill="#e020e0"/><rect x="393.8" y="360.4" width="1.6" height="1.6" fill="#e020e0"/><rect x="385.2" y="364.2" width="1.6" height="1.6" fill="#e020e0"/><rect x="376.4" y="368.4" width="1.6" height="1.6" fill="#e020e0"/><rect x="367.7" y="372.7" width="1.6" height="1.6" fill="#e020e0"/><rect x="358.9" y="376.9" width="1.6" height="1.6" fill="#e020e0"/><rect x="350.2" y="381.2" width="1.6" height="1.6" fill="#e020e0"/><rect x="342.3" y="384.5" width="1.6" height="1.6" fill="#e020e0"/><rect x="334.5" y="387.8" width="1.6" height="1.6" fill="#e020e0"/><rect x="326.6" y="391.1" width="1.6" height="1.6" fill="#e020e0"/><rect x="318.8" y="394.3" width="1.6" height="1.6" fill="#e020e0"/><rect x="310.9" y="397.6" width="1.6" height="1.6" fill="#e020e0"/><rect x="303.1" y="400.9" width="1.6" height="1.6" fill="#e020e0"/><rect x="295.2" y="404.2" width="1.6" height="1.6" fill="#e020e0"/><rect x="286.8" y="408.1" width="1.6" height="1.6" fill="#e020e0"/><rect x="278.5" y="412.0" width="1.6" height="1.6" fill="#e020e0"/><rect x="270.1" y="415.9" width="1.6" height="1.6" fill="#e020e0"/><rect x="261.7" y="419.8" width="1.6" height="1.6" fill="#e020e0"/><rect x="253.4" y="423.7" width="1.6" height="1.6" fill="#e020e0"/><rect x="245.0" y="427.7" width="1.6" height="1.6" fill="#e020e0"/><rect x="236.7" y="431.6" width="1.6" height="1.6" fill="#e020e0"/><rect x="228.3" y="435.5" width="1.6" height="1.6" fill="#e020e0"/><rect x="219.9" y="439.4" width="1.6" height="1.6" fill="#e020e0"/><rect x="211.6" y="443.3" width="1.6" height="1.6" fill="#e020e0"/>
<rect x="203.3" y="447.3" width="1.4" height="1.4" fill="#e020e0"/><rect x="207.2" y="452.0" width="1.4" height="1.4" fill="#e020e0"/><rect x="211.1" y="456.7" width="1.4" height="1.4" fill="#e020e0"/><rect x="215.0" y="461.5" width="1.4" height="1.4" fill="#e020e0"/><rect x="218.9" y="466.2" width="1.4" height="1.4" fill="#e020e0"/><rect x="222.7" y="470.9" width="1.4" height="1.4" fill="#e020e0"/><rect x="226.6" y="475.6" width="1.4" height="1.4" fill="#e020e0"/><rect x="230.5" y="480.4" width="1.4" height="1.4" fill="#e020e0"/><rect x="234.4" y="485.1" width="1.4" height="1.4" fill="#e020e0"/><rect x="238.3" y="489.8" width="1.4" height="1.4" fill="#e020e0"/><rect x="242.2" y="494.5" width="1.4" height="1.4" fill="#e020e0"/><rect x="246.1" y="499.2" width="1.4" height="1.4" fill="#e020e0"/><rect x="250.0" y="504.0" width="1.4" height="1.4" fill="#e020e0"/><rect x="253.9" y="508.7" width="1.4" height="1.4" fill="#e020e0"/><rect x="257.7" y="513.4" width="1.4" height="1.4" fill="#e020e0"/><rect x="261.6" y="518.1" width="1.4" height="1.4" fill="#e020e0"/><rect x="265.5" y="522.9" width="1.4" height="1.4" fill="#e020e0"/><rect x="269.4" y="527.6" width="1.4" height="1.4" fill="#e020e0"/><rect x="273.3" y="532.3" width="1.4" height="1.4" fill="#e020e0"/><rect x="277.3" y="536.8" width="1.4" height="1.4" fill="#e020e0"/><rect x="281.3" y="541.3" width="1.4" height="1.4" fill="#e020e0"/><rect x="285.3" y="545.8" width="1.4" height="1.4" fill="#e020e0"/><rect x="289.3" y="550.3" width="1.4" height="1.4" fill="#e020e0"/><rect x="293.3" y="554.8" width="1.4" height="1.4" fill="#e020e0"/><rect x="297.3" y="559.3" width="1.4" height="1.4" fill="#e020e0"/><rect x="301.3" y="563.8" width="1.4" height="1.4" fill="#e020e0"/><rect x="305.3" y="568.3" width="1.4" height="1.4" fill="#e020e0"/><rect x="309.3" y="572.8" width="1.4" height="1.4" fill="#e020e0"/><rect x="313.3" y="577.3" width="1.4" height="1.4" fill="#e020e0"/><rect x="317.3" y="581.8" width="1.4" height="1.4" fill="#e020e0"/><rect x="321.3" y="586.3" width="1.4" height="1.4" fill="#e020e0"/><rect x="325.3" y="590.8" width="1.4" height="1.4" fill="#e020e0"/><rect x="329.3" y="595.3" width="1.4" height="1.4" fill="#e020e0"/><rect x="333.3" y="599.8" width="1.4" height="1.4" fill="#e020e0"/><rect x="337.3" y="604.3" width="1.4" height="1.4" fill="#e020e0"/><rect x="341.3" y="608.8" width="1.4" height="1.4" fill="#e020e0"/><rect x="345.3" y="613.3" width="1.4" height="1.4" fill="#e020e0"/><rect x="349.3" y="617.8" width="1.4" height="1.4" fill="#e020e0"/><rect x="353.3" y="622.3" width="1.4" height="1.4" fill="#e020e0"/><rect x="357.7" y="626.7" width="1.4" height="1.4" fill="#e020e0"/><rect x="362.1" y="631.0" width="1.4" height="1.4" fill="#e020e0"/><rect x="366.4" y="635.4" width="1.4" height="1.4" fill="#e020e0"/><rect x="370.8" y="639.8" width="1.4" height="1.4" fill="#e020e0"/><rect x="375.2" y="644.2" width="1.4" height="1.4" fill="#e020e0"/><rect x="379.6" y="648.5" width="1.4" height="1.4" fill="#e020e0"/><rect x="383.9" y="652.9" width="1.4" height="1.4" fill="#e020e0"/><rect x="388.3" y="657.3" width="1.4" height="1.4" fill="#e020e0"/><rect x="392.7" y="661.7" width="1.4" height="1.4" fill="#e020e0"/><rect x="397.1" y="666.0" width="1.4" height="1.4" fill="#e020e0"/><rect x="401.4" y="670.4" width="1.4" height="1.4" fill="#e020e0"/><rect x="405.8" y="674.8" width="1.4" height="1.4" fill="#e020e0"/><rect x="410.2" y="679.2" width="1.4" height="1.4" fill="#e020e0"/><rect x="414.6" y="683.5" width="1.4" height="1.4" fill="#e020e0"/><rect x="418.9" y="687.9" width="1.4" height="1.4" fill="#e020e0"/><rect x="423.3" y="692.3" width="1.4" height="1.4" fill="#e020e0"/><rect x="427.6" y="697.1" width="1.4" height="1.4" fill="#e020e0"/><rect x="431.9" y="701.8" width="1.4" height="1.4" fill="#e020e0"/><rect x="436.2" y="706.6" width="1.4" height="1.4" fill="#e020e0"/><rect x="440.5" y="711.4" width="1.4" height="1.4" fill="#e020e0"/><rect x="444.8" y="716.1" width="1.4" height="1.4" fill="#e020e0"/><rect x="449.1" y="720.9" width="1.4" height="1.4" fill="#e020e0"/><rect x="453.5" y="725.7" width="1.4" height="1.4" fill="#e020e0"/><rect x="457.8" y="730.5" width="1.4" height="1.4" fill="#e020e0"/><rect x="462.1" y="735.2" width="1.4" height="1.4" fill="#e020e0"/><rect x="466.4" y="740.0" width="1.4" height="1.4" fill="#e020e0"/><rect x="470.7" y="744.8" width="1.4" height="1.4" fill="#e020e0"/><rect x="475.0" y="749.5" width="1.4" height="1.4" fill="#e020e0"/>
<rect x="570.9" y="870.6" width="1.4" height="1.4" fill="#e020e0"/><rect x="573.5" y="869.0" width="1.4" height="1.4" fill="#e020e0"/><rect x="576.1" y="867.4" width="1.4" height="1.4" fill="#e020e0"/><rect x="578.7" y="865.9" width="1.4" height="1.4" fill="#e020e0"/>
<rect x="726.5" y="218.0" width="2" height="2" fill="#ff2020"/><rect x="736.0" y="218.0" width="2" height="2" fill="#ff2020"/>
<rect x="806.3" y="586.3" width="1.8" height="1.8" fill="#e8e070"/><rect x="815.1" y="584.3" width="1.8" height="1.8" fill="#e8e070"/><rect x="823.9" y="582.3" width="1.8" height="1.8" fill="#e8e070"/><rect x="832.7" y="580.2" width="1.8" height="1.8" fill="#e8e070"/><rect x="841.5" y="578.2" width="1.8" height="1.8" fill="#e8e070"/><rect x="850.3" y="576.2" width="1.8" height="1.8" fill="#e8e070"/><rect x="859.1" y="574.2" width="1.8" height="1.8" fill="#e8e070"/><rect x="867.9" y="572.2" width="1.8" height="1.8" fill="#e8e070"/><rect x="876.7" y="570.1" width="1.8" height="1.8" fill="#e8e070"/><rect x="885.5" y="568.1" width="1.8" height="1.8" fill="#e8e070"/><rect x="894.2" y="566.1" width="1.8" height="1.8" fill="#e8e070"/><rect x="903.0" y="564.1" width="1.8" height="1.8" fill="#e8e070"/><rect x="911.8" y="562.1" width="1.8" height="1.8" fill="#e8e070"/><rect x="920.6" y="560.0" width="1.8" height="1.8" fill="#e8e070"/><rect x="929.4" y="558.0" width="1.8" height="1.8" fill="#e8e070"/><rect x="938.2" y="556.0" width="1.8" height="1.8" fill="#e8e070"/><rect x="947.0" y="554.0" width="1.8" height="1.8" fill="#e8e070"/><rect x="955.8" y="552.0" width="1.8" height="1.8" fill="#e8e070"/><rect x="964.6" y="549.9" width="1.8" height="1.8" fill="#e8e070"/><rect x="973.4" y="547.9" width="1.8" height="1.8" fill="#e8e070"/><rect x="982.2" y="545.9" width="1.8" height="1.8" fill="#e8e070"/><rect x="991.0" y="543.9" width="1.8" height="1.8" fill="#e8e070"/><rect x="999.8" y="541.9" width="1.8" height="1.8" fill="#e8e070"/><rect x="1008.6" y="539.8" width="1.8" height="1.8" fill="#e8e070"/><rect x="1017.4" y="537.8" width="1.8" height="1.8" fill="#e8e070"/><rect x="1026.2" y="535.8" width="1.8" height="1.8" fill="#e8e070"/><rect x="1035.0" y="533.8" width="1.8" height="1.8" fill="#e8e070"/><rect x="1043.8" y="531.8" width="1.8" height="1.8" fill="#e8e070"/><rect x="1052.6" y="529.7" width="1.8" height="1.8" fill="#e8e070"/><rect x="1061.3" y="527.7" width="1.8" height="1.8" fill="#e8e070"/><rect x="1070.1" y="525.7" width="1.8" height="1.8" fill="#e8e070"/><rect x="1078.9" y="523.7" width="1.8" height="1.8" fill="#e8e070"/><rect x="1087.7" y="521.7" width="1.8" height="1.8" fill="#e8e070"/><rect x="1096.5" y="519.6" width="1.8" height="1.8" fill="#e8e070"/><rect x="1105.3" y="517.6" width="1.8" height="1.8" fill="#e8e070"/><rect x="1114.1" y="515.6" width="1.8" height="1.8" fill="#e8e070"/><rect x="1122.9" y="513.6" width="1.8" height="1.8" fill="#e8e070"/><rect x="1131.7" y="511.6" width="1.8" height="1.8" fill="#e8e070"/><rect x="1140.5" y="509.6" width="1.8" height="1.8" fill="#e8e070"/><rect x="1149.3" y="507.5" width="1.8" height="1.8" fill="#e8e070"/><rect x="1158.1" y="505.5" width="1.8" height="1.8" fill="#e8e070"/><rect x="1166.9" y="503.5" width="1.8" height="1.8" fill="#e8e070"/><rect x="1175.7" y="501.5" width="1.8" height="1.8" fill="#e8e070"/><rect x="1184.5" y="499.5" width="1.8" height="1.8" fill="#e8e070"/><rect x="1193.3" y="497.4" width="1.8" height="1.8" fill="#e8e070"/><rect x="1202.1" y="495.4" width="1.8" height="1.8" fill="#e8e070"/><rect x="1210.9" y="493.4" width="1.8" height="1.8" fill="#e8e070"/><rect x="1219.7" y="491.4" width="1.8" height="1.8" fill="#e8e070"/><rect x="1228.4" y="489.4" width="1.8" height="1.8" fill="#e8e070"/><rect x="1237.2" y="487.3" width="1.8" height="1.8" fill="#e8e070"/><rect x="1246.0" y="485.3" width="1.8" height="1.8" fill="#e8e070"/><rect x="1254.8" y="483.3" width="1.8" height="1.8" fill="#e8e070"/><rect x="1263.6" y="481.3" width="1.8" height="1.8" fill="#e8e070"/><rect x="1272.4" y="479.3" width="1.8" height="1.8" fill="#e8e070"/><rect x="1281.2" y="477.2" width="1.8" height="1.8" fill="#e8e070"/><rect x="1290.0" y="475.2" width="1.8" height="1.8" fill="#e8e070"/><rect x="1298.8" y="473.2" width="1.8" height="1.8" fill="#e8e070"/><rect x="1307.6" y="471.2" width="1.8" height="1.8" fill="#e8e070"/><rect x="1316.4" y="469.2" width="1.8" height="1.8" fill="#e8e070"/><rect x="1325.2" y="467.1" width="1.8" height="1.8" fill="#e8e070"/><rect x="1334.0" y="465.1" width="1.8" height="1.8" fill="#e8e070"/><rect x="1342.8" y="463.1" width="1.8" height="1.8" fill="#e8e070"/><rect x="1351.6" y="461.1" width="1.8" height="1.8" fill="#e8e070"/><rect x="1360.4" y="459.1" width="1.8" height="1.8" fill="#e8e070"/><rect x="1369.2" y="457.0" width="1.8" height="1.8" fill="#e8e070"/><rect x="1378.0" y="455.0" width="1.8" height="1.8" fill="#e8e070"/><rect x="1386.8" y="453.0" width="1.8" height="1.8" fill="#e8e070"/><rect x="1395.5" y="451.0" width="1.8" height="1.8" fill="#e8e070"/><rect x="1404.3" y="449.0" width="1.8" height="1.8" fill="#e8e070"/><rect x="1413.1" y="446.9" width="1.8" height="1.8" fill="#e8e070"/><rect x="1421.9" y="444.9" width="1.8" height="1.8" fill="#e8e070"/><rect x="1430.7" y="442.9" width="1.8" height="1.8" fill="#e8e070"/><rect x="1439.5" y="440.9" width="1.8" height="1.8" fill="#e8e070"/><rect x="1448.3" y="438.9" width="1.8" height="1.8" fill="#e8e070"/><rect x="1457.1" y="436.8" width="1.8" height="1.8" fill="#e8e070"/><rect x="1465.9" y="434.8" width="1.8" height="1.8" fill="#e8e070"/>
<rect x="1271.6" y="638.3" width="1.8" height="1.8" fill="#e8e070"/><rect x="1279.3" y="635.3" width="1.8" height="1.8" fill="#e8e070"/><rect x="1287.0" y="632.3" width="1.8" height="1.8" fill="#e8e070"/><rect x="1294.7" y="629.2" width="1.8" height="1.8" fill="#e8e070"/><rect x="1302.3" y="626.2" width="1.8" height="1.8" fill="#e8e070"/><rect x="1310.0" y="623.2" width="1.8" height="1.8" fill="#e8e070"/><rect x="1317.7" y="620.1" width="1.8" height="1.8" fill="#e8e070"/><rect x="1325.4" y="617.1" width="1.8" height="1.8" fill="#e8e070"/><rect x="1333.1" y="614.1" width="1.8" height="1.8" fill="#e8e070"/><rect x="1343.1" y="610.1" width="1.8" height="1.8" fill="#e8e070"/><rect x="1353.1" y="606.1" width="1.8" height="1.8" fill="#e8e070"/><rect x="1361.4" y="603.1" width="1.8" height="1.8" fill="#e8e070"/><rect x="1369.8" y="600.1" width="1.8" height="1.8" fill="#e8e070"/><rect x="1378.1" y="597.1" width="1.8" height="1.8" fill="#e8e070"/><rect x="1386.4" y="594.1" width="1.8" height="1.8" fill="#e8e070"/><rect x="1394.8" y="591.1" width="1.8" height="1.8" fill="#e8e070"/><rect x="1403.1" y="588.1" width="1.8" height="1.8" fill="#e8e070"/><rect x="1413.1" y="584.8" width="1.8" height="1.8" fill="#e8e070"/><rect x="1423.1" y="581.4" width="1.8" height="1.8" fill="#e8e070"/><rect x="1433.1" y="578.1" width="1.8" height="1.8" fill="#e8e070"/><rect x="1441.9" y="576.0" width="1.8" height="1.8" fill="#e8e070"/><rect x="1450.7" y="573.8" width="1.8" height="1.8" fill="#e8e070"/><rect x="1459.5" y="571.7" width="1.8" height="1.8" fill="#e8e070"/><rect x="1468.3" y="569.5" width="1.8" height="1.8" fill="#e8e070"/>
<line x1="784.0" y1="278.0" x2="784.5" y2="291.5" stroke="#58c858" stroke-width="8.5" stroke-linecap="round"/>
<line x1="567.0" y1="339.0" x2="569.0" y2="354.0" stroke="#58c858" stroke-width="8.5" stroke-linecap="round"/>
<line x1="505.5" y1="462.0" x2="508.5" y2="479.0" stroke="#58c858" stroke-width="8.5" stroke-linecap="round"/>
<line x1="625.0" y1="562.0" x2="627.0" y2="580.0" stroke="#58c858" stroke-width="8.5" stroke-linecap="round"/>
<line x1="976.5" y1="554.0" x2="973.5" y2="572.0" stroke="#58c858" stroke-width="8.5" stroke-linecap="round"/>
<line x1="850.0" y1="604.5" x2="849.5" y2="625.0" stroke="#58c858" stroke-width="8.5" stroke-linecap="round"/>
<line x1="1275.0" y1="623.0" x2="1263.0" y2="642.0" stroke="#cc4444" stroke-width="9.5" stroke-linecap="round"/>
<polygon points="1114.0,333.0 1127.0,333.5 1127.0,331.0 1136.0,336.0 1127.0,340.0 1127.0,337.5 1115.0,337.0" fill="#ee1010"/>
<g transform="translate(745.5 594.5) rotate(9.5)"><rect x="-68" y="-23" width="136" height="46" rx="23" fill="#e8e8e8" stroke="#d6d6d6" stroke-width="1.5" opacity="0.88"/><rect x="-62" y="-17" width="124" height="34" rx="17" fill="none" stroke="#d6d6d6" stroke-width="1"/><circle cx="-44" cy="0" r="9" fill="none" stroke="#cfcfcf" stroke-width="1.2"/><circle cx="44" cy="0" r="9" fill="none" stroke="#cfcfcf" stroke-width="1.2"/><rect x="-28" y="-12" width="40" height="26" fill="#f29a92" opacity="0.55"/></g>
<polygon points="716.5,579.1 740.6,578.0 758.1,584.6 766.8,589.0 767.9,608.6 762.5,618.5 729.6,619.6 711.0,599.9" fill="#f0a096" opacity="0.55"/>
<polygon points="722.0,580.2 736.2,579.1 735.1,595.5 720.9,594.4" fill="#ee8a80" opacity="0.6"/>
<polygon points="715.4,597.7 729.6,598.8 728.6,605.4 714.3,604.3" fill="#ee7a70" opacity="0.6"/>
<polygon points="753.7,604.3 765.8,607.6 764.7,611.9 752.6,609.7" fill="#ee7a70" opacity="0.6"/>
<polygon points="713.8,615.2 725.3,614.1 740.6,617.4 754.8,621.8 762.5,626.2 764.7,629.4 757.0,633.8 740.6,633.8 731.8,632.7 725.3,629.4 711.0,626.2 707.8,625.6" fill="#ff1a00"/>
<path d="M707.8,626.2 L713.2,630.0 M729.6,633.8 L731.8,641.5 L750.4,644.2 M740.6,630.5 L764.7,627.2 M746.1,635.5 L762.5,636.2 M727.5,642.0 L734.0,638.2" stroke="#ff1a00" stroke-width="1.1" fill="none"/>
<text x="494.5" y="387.6" font-family="Liberation Sans" font-size="10" letter-spacing="-0.45" fill="#ffffff">p3-&gt;0.2</text>
<text x="611.6" y="478.2" font-family="Liberation Sans" font-size="10" letter-spacing="-0.45" fill="#ffffff">p2-&gt;0.2</text>
<text x="957.4" y="472.4" font-family="Liberation Sans" font-size="10" letter-spacing="-0.45" fill="#ffffff">p0-&gt;0.2</text>
<text x="831.8" y="518.3" font-family="Liberation Sans" font-size="10" letter-spacing="-0.45" fill="#ffffff">p1-&gt;0.2</text>
<text x="556.5" y="275.6" font-family="Liberation Sans" font-size="8" letter-spacing="-0.5" fill="#ffffff">p4-&gt;0.2</text>
<text x="773.8" y="219.5" font-family="Liberation Sans" font-size="8" letter-spacing="-0.5" fill="#ffffff">p5-&gt;0.2</text>
<text x="1233.8" y="533.5" font-family="Liberation Sans" font-size="10" letter-spacing="-0.1" fill="#ffffff">PointManager</text>
<path d="M1358 703L1358 719L1362 715L1365 722L1367.5 721L1364.5 714L1370 714Z" fill="#fff" stroke="#000" stroke-width="1"/>
</svg></div>
<div class="a" style="left:1906px;top:98px;width:13.5px;height:905px;border:1px solid #8c8c8c;border-radius:3.5px;background:linear-gradient(90deg,#e2e2e2,#cdcdcd)"></div>
<div class="a" style="left:1px;top:1010px;width:1919px;height:26px;background:#c8c8c8"></div>
<div class="t" style="left:27.80px;top:1014.83px;font-size:17.5px;color:#4c4c4c;font-weight:normal;letter-spacing:0.267px;">Time</div>
<div class="a" style="left:1px;top:1036px;width:1919px;height:44px;background:#f2f1f0"></div>
<div class="a" style="left:1px;top:1077px;width:1919px;height:1px;background:#d8d5d1"></div>
<div class="t" style="left:12.50px;top:1049.30px;font-size:17px;color:#3c3c3c;font-weight:normal;letter-spacing:0.062px;">ROS Time:</div>
<div class="fld" style="left:105px;top:1042px;width:161px;height:30px"></div>
<div class="t" style="left:110.20px;top:1049.30px;font-size:17px;color:#3c3c3c;font-weight:normal;letter-spacing:0.500px;">1395.44</div>
<div class="t" style="left:274.00px;top:1049.30px;font-size:17px;color:#3c3c3c;font-weight:normal;letter-spacing:0.027px;">ROS Elapsed:</div>
<div class="fld" style="left:390px;top:1042px;width:161px;height:30px"></div>
<div class="t" style="left:395.50px;top:1049.30px;font-size:17px;color:#3c3c3c;font-weight:normal;letter-spacing:0.500px;">1395.44</div>
<div class="t" style="left:558.20px;top:1049.30px;font-size:17px;color:#3c3c3c;font-weight:normal;letter-spacing:0.678px;">Wall Time:</div>
<div class="fld" style="left:651px;top:1042px;width:161px;height:30px"></div>
<div class="t" style="left:656.00px;top:1049.30px;font-size:17px;color:#3c3c3c;font-weight:normal;letter-spacing:0.692px;">1405351967.74</div>
<div class="t" style="left:819.20px;top:1049.30px;font-size:17px;color:#3c3c3c;font-weight:normal;letter-spacing:0.458px;">Wall Elapsed:</div>
<div class="fld" style="left:936px;top:1042px;width:161px;height:30px"></div>
<div class="t" style="left:941.00px;top:1049.30px;font-size:17px;color:#3c3c3c;font-weight:normal;letter-spacing:0.517px;">1624.19</div>
<div class="cbu" style="left:1771px;top:1050px"></div>
<div class="t" style="left:1793.40px;top:1049.30px;font-size:17px;color:#3c3c3c;font-weight:normal;letter-spacing:0.955px;">Experimental</div>
<svg class="a" style="left:0;top:0" width="1920" height="1080"><rect x="1496" y="5" width="18" height="13" fill="#2b2b29"/><rect x="1496" y="17" width="10" height="1" fill="#8a8a86"/><rect x="1506" y="12" width="8" height="9" fill="#d2d0cb"/><rect x="1528.5" y="6" width="17.5" height="12" rx="1" fill="#e4e0d8" stroke="#222" stroke-width="0.8"/><path d="M1529.5 7 L1537.2 14 L1545 7 M1529.5 17 L1534.5 12.5 M1545 17 L1540 12.5" stroke="#333" stroke-width="1.1" fill="none"/><rect x="1560.5" y="6.5" width="18" height="10.5" rx="2" fill="none" stroke="#d8d4cc" stroke-width="1.3"/><rect x="1579" y="9.5" width="1.5" height="4.5" fill="#d8d4cc"/><rect x="1562.5" y="8.5" width="14" height="6.5" fill="#d8d4cc"/><path d="M1566 9.5 L1570 12.5 L1569 11 L1573 14" stroke="#333" stroke-width="1.2" fill="none"/><path d="M1592 8 L1599 14.5 L1595 18.5 L1595 4 L1599 8 L1592 14.5" stroke="#dfdbd2" stroke-width="1.1" fill="none"/><path d="M1618 21 L1618 10 L1614 10 L1619.5 4 L1625 10 L1621 10 Z" fill="#dfdbd2"/><path d="M1625 5 L1625 15 L1621 15 L1626.5 21 L1632 15 L1628 15 L1628 5 Z" fill="#dfdbd2" stroke="#3c3b37" stroke-width="0.6"/><path d="M1645 9.5 L1649 9.5 L1653.5 5 L1653.5 18 L1649 13.5 L1645 13.5 Z" fill="#dfdbd2"/><path d="M1656 8.5 Q1658 11.5 1656 14.5 M1658.5 6.5 Q1661.5 11.5 1658.5 16.5 M1661.5 4.5 Q1665.5 11.5 1661.5 18.5" stroke="#dfdbd2" stroke-width="1.3" fill="none"/><circle cx="1740.5" cy="8.5" r="3.6" fill="#dfdbd2"/><path d="M1734 18 Q1734.5 12.5 1740.5 12.5 Q1746.5 12.5 1747 18 Z" fill="#dfdbd2"/><g transform="translate(1903.5 12)"><circle r="5.2" fill="none" stroke="#dfdbd2" stroke-width="2.4"/><rect x="-1.3" y="-8" width="2.6" height="3.2" fill="#dfdbd2" transform="rotate(0)"/><rect x="-1.3" y="-8" width="2.6" height="3.2" fill="#dfdbd2" transform="rotate(45)"/><rect x="-1.3" y="-8" width="2.6" height="3.2" fill="#dfdbd2" transform="rotate(90)"/><rect x="-1.3" y="-8" width="2.6" height="3.2" fill="#dfdbd2" transform="rotate(135)"/><rect x="-1.3" y="-8" width="2.6" height="3.2" fill="#dfdbd2" transform="rotate(180)"/><rect x="-1.3" y="-8" width="2.6" height="3.2" fill="#dfdbd2" transform="rotate(225)"/><rect x="-1.3" y="-8" width="2.6" height="3.2" fill="#dfdbd2" transform="rotate(270)"/><rect x="-1.3" y="-8" width="2.6" height="3.2" fill="#dfdbd2" transform="rotate(315)"/><rect x="-1.2" y="-7.5" width="2.4" height="6" fill="#dfdbd2"/></g><path d="M16.5 38.5 L22.5 44.5 M22.5 38.5 L16.5 44.5" stroke="#2a1a14" stroke-width="1.3"/><rect x="34" y="40.7" width="7.5" height="1.5" fill="#2e2d2a"/><rect x="52" y="38" width="7" height="7" fill="none" stroke="#2e2d2a" stroke-width="1.4"/><rect x="5" y="74" width="4" height="1" fill="#cfccc8"/><rect x="5" y="77" width="4" height="1" fill="#cfccc8"/><rect x="5" y="80" width="4" height="1" fill="#cfccc8"/><path d="M21.5 83 L18.5 79.5 Q18 77.5 19.5 77.5 L21.5 79 L21.5 71 Q22.8 69.8 24 71 L24 76 Q25.3 74.8 26.5 76 L26.5 77 Q27.8 75.8 29 77 L29 78 Q30.5 76.8 32 78 L32 83.5 L31.5 85.5 L22.5 85.5 Z" fill="#fff" stroke="#000" stroke-width="1.2" stroke-linejoin="round"/><g stroke="#222" stroke-width="1" fill="#fff"><path d="M120 69.5 L123 73 L121 73 L121 75.5 L126 75.5 L126 73.5 L128.5 77 L126 80.5 L126 78.5 L121 78.5 L121 81.5 L123 81.5 L120 85 L117 81.5 L119 81.5 L119 78.5 L114 78.5 L114 80.5 L111.5 77 L114 73.5 L114 75.5 L119 75.5 L119 73 L117 73 Z"/></g><rect x="246" y="70.5" width="16" height="12.3" fill="#fdf6b6" stroke="#111" stroke-width="1.1" stroke-dasharray="2 1.2"/><path d="M258.5 83 L262.5 83 L262.5 79 Z" fill="#000"/><g fill="none" stroke="#555" stroke-width="1"><circle cx="337.5" cy="77.3" r="5"/><circle cx="337.5" cy="77.3" r="2.6"/><path d="M337.5 69 V85.6 M329 77.3 H346"/></g><rect x="464" y="73.8" width="16" height="6" rx="1" fill="#f4e7a8" stroke="#444" stroke-width="1.2"/><path d="M466.5 74.5 v2 M468.5 74.5 v2 M470.5 74.5 v2 M472.5 74.5 v2 M474.5 74.5 v2 M476.5 74.5 v2" stroke="#666" stroke-width="0.6"/><path d="M564.4 82.4 L574.4 74.5" stroke="#00dd22" stroke-width="2.4"/><path d="M580.1 70 L577.4 77.5 L572.9 73 Z" fill="#00dd22" stroke="#1a6a1a" stroke-width="0.4"/><path d="M724.5 82.4 L734.5 74.5" stroke="#00dd22" stroke-width="2.4"/><path d="M740.2 70 L737.5 77.5 L733.0 73 Z" fill="#00dd22" stroke="#1a6a1a" stroke-width="0.4"/><defs><linearGradient id="pg" x1="0" y1="0" x2="0" y2="1"><stop offset="0" stop-color="#e8502a"/><stop offset="1" stop-color="#5a2e10"/></linearGradient></defs><path d="M858 84.3 L853.2 74.5 Q852.5 68.9 858 68.9 Q863.5 68.9 862.8 74.5 Z" fill="url(#pg)"/><circle cx="858" cy="73.5" r="1.7" fill="#fff"/><path d="M989 71.5 V82.5 M983.5 77 H994.5" stroke="#3a6cc0" stroke-width="3.2"/><path d="M989 72.3 V81.7 M984.3 77 H993.7" stroke="#b8d0f4" stroke-width="1.2"/><rect x="1027" y="75" width="12" height="4" rx="1" fill="#b8d0f4" stroke="#3a6cc0" stroke-width="1.2"/><path d="M1046 78.5 L1053 78.5 L1049.5 83 Z" fill="#707070"/><rect x="5.8" y="103.8" width="14.2" height="11" rx="1.2" fill="#000"/><rect x="7" y="105" width="4" height="8.6" fill="#d87c7c"/><rect x="11" y="105" width="4" height="8.6" fill="#7ccc7c"/><rect x="15" y="105" width="3.9" height="8.6" fill="#9c9ce0"/><path d="M12 114.8 h2 v1.5 h-2 z" fill="#000"/><rect x="8.5" y="116.5" width="9" height="2.2" rx="1" fill="#000"/><rect x="387.5" y="102.5" width="14" height="15" rx="3" fill="#e6e4e2" stroke="#a9a6a2" stroke-width="1"/><path d="M391.5 107.0 L397.5 113.0 M397.5 107.0 L391.5 113.0" stroke="#555" stroke-width="2.2"/><rect x="1903.5" y="1015.5" width="14" height="15" rx="3" fill="#e6e4e2" stroke="#a9a6a2" stroke-width="1"/><path d="M1907.5 1020.0 L1913.5 1026.0 M1913.5 1020.0 L1907.5 1026.0" stroke="#555" stroke-width="2.2"/><path d="M10.8 132 L18.3 132 L14.55 138.5 Z" fill="#707070"/><path d="M10.8 228 L18.3 228 L14.55 234.5 Z" fill="#707070"/><path d="M10.8 300 L18.3 300 L14.55 306.5 Z" fill="#707070"/><path d="M10.8 612 L18.3 612 L14.55 618.5 Z" fill="#707070"/><path d="M11 276.5 L17.5 280.1 L11 283.7 Z" fill="#707070"/><path d="M11 516.5 L17.5 520.1 L11 523.7 Z" fill="#707070"/><path d="M11 540.5 L17.5 544.1 L11 547.7 Z" fill="#707070"/><path d="M11 564.5 L17.5 568.1 L11 571.7 Z" fill="#707070"/><path d="M11 588.5 L17.5 592.1 L11 595.7 Z" fill="#707070"/><path d="M31 324.5 L37.5 328.1 L31 331.7 Z" fill="#707070"/><path d="M31 492.5 L37.5 496.1 L31 499.7 Z" fill="#707070"/><path d="M31 636.5 L37.5 640.1 L31 643.7 Z" fill="#707070"/><g transform="translate(32.4 135.6)"><polygon points="6.50,-1.15 6.50,1.15 4.47,1.07 3.92,2.40 5.41,3.79 3.79,5.41 2.40,3.92 1.07,4.47 1.15,6.50 -1.15,6.50 -1.07,4.47 -2.40,3.92 -3.79,5.41 -5.41,3.79 -3.92,2.40 -4.47,1.07 -6.50,1.15 -6.50,-1.15 -4.47,-1.07 -3.92,-2.40 -5.41,-3.79 -3.79,-5.41 -2.40,-3.92 -1.07,-4.47 -1.15,-6.50 1.15,-6.50 1.07,-4.47 2.40,-3.92 3.79,-5.41 5.41,-3.79 3.92,-2.40 4.47,-1.07" fill="#a8c4ec" stroke="#3a74c4" stroke-width="1.1"/><circle r="2.4" fill="#fff" stroke="#3a74c4" stroke-width="1.1"/></g><path d="M26.5 233.5 L30.0 237.5 L39.0 226.5" stroke="#1a7a1a" stroke-width="2" fill="none"/><path d="M46 257.0 L49.5 261.0 L58.5 250.0" stroke="#1a7a1a" stroke-width="2" fill="none"/><path d="M46 329.0 L49.5 333.0 L58.5 322.0" stroke="#1a7a1a" stroke-width="2" fill="none"/><path d="M46 641.0 L49.5 645.0 L58.5 634.0" stroke="#1a7a1a" stroke-width="2" fill="none"/><g fill="none" stroke="#222" stroke-width="1.1"><path d="M26.5 279.2 L33.2 274.8 L40 279.2 L33.2 283.6 Z M29.8 277 L36.6 281.4 M36.6 277 L29.8 281.4"/></g><g><rect x="30" y="297" width="5" height="2.5" rx="1" fill="#2a3aa0"/><rect x="30.5" y="300.5" width="4" height="1" fill="#222"/><rect x="26" y="303" width="3" height="8.5" fill="#111"/><rect x="29.5" y="303" width="3" height="8.5" fill="#222"/><path d="M33 306 L36 306 L36.5 311 L39.5 311 L41 306" stroke="#111" stroke-width="1.2" fill="none"/><rect x="25" y="311" width="11" height="1" fill="#111"/></g><g stroke-width="1.3" fill="none"><path d="M32 521 L32 512.5" stroke="#2a2ac0"/><path d="M32 521 L40 518" stroke="#10b010"/><path d="M32 521 L25.5 527" stroke="#e01010"/></g><path d="M25 545 L28.5 545 L30.5 540.5 L33 548.5 L35 543.5 L37 546 L40 545.5" stroke="#e01010" stroke-width="2" fill="none"/><g fill="#555"><rect x="25" y="560" width="3.5" height="3.5"/><rect x="32" y="560" width="3.5" height="3.5"/><rect x="25" y="567" width="3.5" height="3.5"/><rect x="28.5" y="563.5" width="3.5" height="3.5"/><rect x="35.5" y="563.5" width="3.5" height="3.5"/><rect x="32" y="570.5" width="3.5" height="3.5"/><rect x="35.5" y="570.5" width="3.5" height="3.5"/><rect x="25" y="570.5" width="3.5" height="3.5" fill="#999"/></g><g stroke="#e01010" stroke-width="1.5" fill="none"><path d="M26 590 L35 585 M26 599 L35 594 M28 596 L38 592"/></g><path d="M35 584 L37.5 583.5 L35.5 586.5 Z M38 591 L40.5 590.5 L38.5 593.5 Z" fill="#e01010"/><path d="M32.5 607.5 L40 622 L25 622 Z" fill="none" stroke="#e01010" stroke-width="1.3"/><path d="M25 622 L32.5 607.5" stroke="#10a010" stroke-width="1.3"/><path d="M40 622 L25 622" stroke="#2a2ac0" stroke-width="1.3"/><circle cx="32.5" cy="617" r="3.8" fill="#111"/><circle cx="31.5" cy="615.8" r="1.1" fill="#fff"/><rect x="405" y="547" width="4" height="1" fill="#cfccc8"/><rect x="405" y="550" width="4" height="1" fill="#cfccc8"/><rect x="405" y="553" width="4" height="1" fill="#cfccc8"/><path d="M421 547 L421 555 L416 551 Z" fill="#888" stroke="#666" stroke-width="0.6"/><path d="M1917 547.5 L1917 555.5 L1912 551.5 Z" fill="#999" stroke="#777" stroke-width="0.6"/><rect x="199.5" y="879" width="1" height="4" fill="#c8c5c1"/><rect x="201.5" y="879" width="1" height="4" fill="#c8c5c1"/><rect x="203.5" y="879" width="1" height="4" fill="#c8c5c1"/><rect x="958" y="1005" width="1" height="4" fill="#c8c5c1"/><rect x="960" y="1005" width="1" height="4" fill="#c8c5c1"/><rect x="962" y="1005" width="1" height="4" fill="#c8c5c1"/><circle cx="13.3" cy="1023.3" r="6.3" fill="#fff" stroke="#3c3c3c" stroke-width="1.6"/><path d="M13 1019.5 V1023.8 H16.5" stroke="#222" stroke-width="1.3" fill="none"/></svg>
</body></html>
